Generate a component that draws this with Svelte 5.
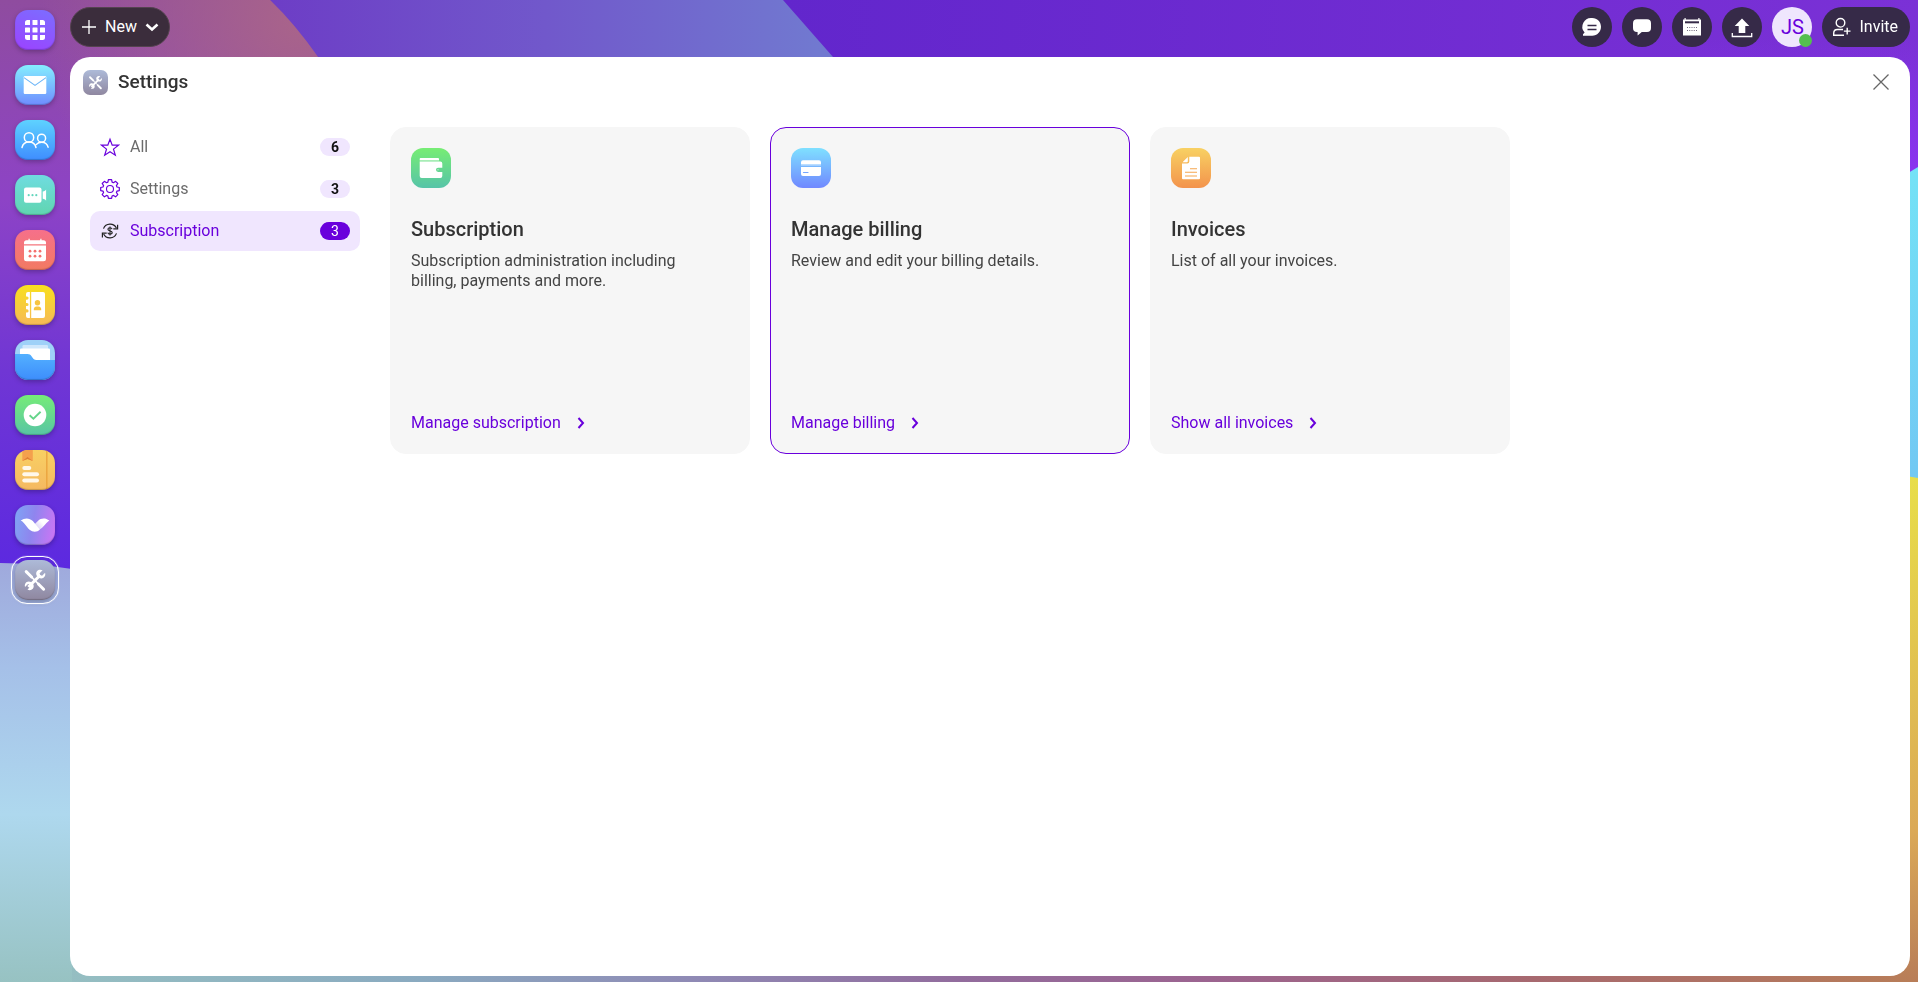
<script>
  const apps = [
    { id: 'apps', label: 'All apps' },
    { id: 'mail', label: 'Mail' },
    { id: 'contacts', label: 'Contacts' },
    { id: 'meetings', label: 'Meetings' },
    { id: 'calendar', label: 'Calendar' },
    { id: 'address', label: 'Address book' },
    { id: 'files', label: 'Files' },
    { id: 'tasks', label: 'Tasks' },
    { id: 'notes', label: 'Notes' },
    { id: 'sign', label: 'Partners' },
    { id: 'settings', label: 'Settings' }
  ];

  const tools = [
    { id: 'chat', label: 'Chat' },
    { id: 'comment', label: 'Comments' },
    { id: 'agenda', label: 'Agenda' },
    { id: 'upload', label: 'Upload' }
  ];

  const sections = [
    { id: 'all', label: 'All', count: 6 },
    { id: 'settings', label: 'Settings', count: 3 },
    { id: 'subscription', label: 'Subscription', count: 3 }
  ];

  const cards = [
    {
      id: 'wallet',
      title: 'Subscription',
      text: 'Subscription administration including billing, payments and more.',
      link: 'Manage subscription'
    },
    {
      id: 'billing',
      title: 'Manage billing',
      text: 'Review and edit your billing details.',
      link: 'Manage billing'
    },
    {
      id: 'invoice',
      title: 'Invoices',
      text: 'List of all your invoices.',
      link: 'Show all invoices'
    }
  ];

  let selected = $state('subscription');
  let highlighted = $state('billing');
</script>

{#snippet toolsGlyph()}
  <path d="M11.2 11.6 16.6 17M23.6 24.2l5 5" stroke="#fff" stroke-width="3" stroke-linecap="round" />
  <path d="m16 16.4 8 8.2" stroke="#fff" stroke-width="1.6" />
  <path d="M13.4 27 25.4 15" stroke="#fff" stroke-width="3" />
  <path d="M27.6 10.3l-3 3 .5 2 2 .5 3-3c.6 2-.1 4-1.6 5-1.3.9-3 .9-4.4.2l-2.5-2.5c-.7-1.5-.6-3.3.5-4.5 1.3-1.5 3.5-1.7 5.5-.7z" fill="#fff" />
  <path d="M12.5 29.6l3-3-.5-2-2-.5-3 3c-.6-2 .1-4 1.6-5 1.3-.9 3-.9 4.4-.2l2.3 2.3c.7 1.5.6 3.3-.5 4.5-1.3 1.5-3.3 1.9-5.3.9z" fill="#fff" />
{/snippet}

<svg class="wallpaper" viewBox="0 0 1918 982" preserveAspectRatio="none" aria-hidden="true">
  <defs>
    <linearGradient id="w-left" x1="0" y1="0" x2="0" y2="570" gradientUnits="userSpaceOnUse">
      <stop offset="0" stop-color="#8f4c9f" />
      <stop offset=".35" stop-color="#8d43c6" />
      <stop offset=".65" stop-color="#7036d4" />
      <stop offset="1" stop-color="#5c29e0" />
    </linearGradient>
    <radialGradient id="w-left-warm" cx="300" cy="20" r="260" gradientUnits="userSpaceOnUse">
      <stop offset="0" stop-color="#a9648a" />
      <stop offset="1" stop-color="#a9648a" stop-opacity="0" />
    </radialGradient>
    <linearGradient id="w-band" x1="270" y1="0" x2="820" y2="0" gradientUnits="userSpaceOnUse">
      <stop offset="0" stop-color="#6d3dc6" />
      <stop offset=".5" stop-color="#7158cb" />
      <stop offset="1" stop-color="#7179d0" />
    </linearGradient>
    <linearGradient id="w-top" x1="783" y1="0" x2="1918" y2="60" gradientUnits="userSpaceOnUse">
      <stop offset="0" stop-color="#6226cc" />
      <stop offset="1" stop-color="#7b31d6" />
    </linearGradient>
    <linearGradient id="w-edge" x1="0" y1="40" x2="0" y2="175" gradientUnits="userSpaceOnUse">
      <stop offset="0" stop-color="#8a34f0" stop-opacity="0" />
      <stop offset="1" stop-color="#8a34f0" />
    </linearGradient>
    <linearGradient id="w-cyan" x1="0" y1="170" x2="0" y2="478" gradientUnits="userSpaceOnUse">
      <stop offset="0" stop-color="#74e2f6" />
      <stop offset="1" stop-color="#72c8f3" />
    </linearGradient>
    <linearGradient id="w-yellow" x1="0" y1="476" x2="0" y2="982" gradientUnits="userSpaceOnUse">
      <stop offset="0" stop-color="#e8de49" />
      <stop offset=".7" stop-color="#dba956" />
      <stop offset="1" stop-color="#b87d58" />
    </linearGradient>
    <linearGradient id="w-sky" x1="0" y1="563" x2="0" y2="982" gradientUnits="userSpaceOnUse">
      <stop offset="0" stop-color="#9fa9dc" />
      <stop offset=".25" stop-color="#a5c0e8" />
      <stop offset=".6" stop-color="#aed8ee" />
      <stop offset="1" stop-color="#97c2c2" />
    </linearGradient>
    <linearGradient id="w-bottom" x1="0" y1="0" x2="1918" y2="0" gradientUnits="userSpaceOnUse">
      <stop offset="0" stop-color="#97c2c2" />
      <stop offset=".22" stop-color="#8aaac0" />
      <stop offset=".36" stop-color="#8f8ab5" />
      <stop offset=".5" stop-color="#926c9d" />
      <stop offset=".63" stop-color="#9c6490" />
      <stop offset=".8" stop-color="#a7696f" />
      <stop offset="1" stop-color="#b87d58" />
    </linearGradient>
  </defs>
  <rect width="1918" height="982" fill="url(#w-top)" />
  <rect x="1700" y="40" width="218" height="140" fill="url(#w-edge)" />
  <path d="M200 0H783L833 57V200H200z" fill="url(#w-band)" />
  <path d="M0 0H270Q295 24 318 57V640H0z" fill="url(#w-left)" />
  <path d="M0 0H270Q295 24 318 57V300H0z" fill="url(#w-left-warm)" />
  <rect y="940" x="60" width="1858" height="42" fill="url(#w-bottom)" />
  <path d="M0 563Q36 563 72 569V982H0z" fill="url(#w-sky)" />
  <path d="M1900 178 1918 167V500H1900z" fill="url(#w-cyan)" />
  <path d="M1900 475 1918 478V982H1900z" fill="url(#w-yellow)" />
</svg>

<div class="shell">
  <nav class="rail" aria-label="Apps">
    {#each apps as app}
      <button class="tile {app.id}" class:current={app.id === 'settings'} aria-label={app.label}>
        <svg viewBox="0 0 40 40" fill="none" aria-hidden="true">
          {#if app.id === 'apps'}
            <g fill="#fff">
              <path d="M12.5 10H15v5h-5v-2.5a2.5 2.5 0 0 1 2.5-2.5zM25 10h2.5a2.5 2.5 0 0 1 2.5 2.5V15h-5zM10 25h5v5h-2.5a2.5 2.5 0 0 1-2.5-2.5zM25 25h5v2.5a2.5 2.5 0 0 1-2.5 2.5H25z" />
              <rect x="17.5" y="10" width="5" height="5" rx=".6" />
              <rect x="10" y="17.5" width="5" height="5" rx=".6" />
              <rect x="17.5" y="17.5" width="5" height="5" rx=".6" />
              <rect x="25" y="17.5" width="5" height="5" rx=".6" />
              <rect x="17.5" y="25" width="5" height="5" rx=".6" />
            </g>
          {:else if app.id === 'mail'}
            <rect x="8.7" y="11" width="22.6" height="18" rx="1.2" fill="#fff" />
            <path d="m9 12.6 11 7.8 11-7.8" stroke="#6cb5f8" stroke-width="1.1" />
          {:else if app.id === 'contacts'}
            <g stroke="#fff" stroke-width="1.5" stroke-linecap="round">
              <circle cx="14" cy="17.4" r="4.7" />
              <circle cx="26.6" cy="18.2" r="4" />
              <path d="M7 27.5c.8-3.3 3.6-5.4 7-5.4s6.2 2.1 7 5.4M21.5 24.4c1.2-1.5 3-2.2 5.1-2.2 3.3 0 5.8 2 6.5 5" />
            </g>
          {:else if app.id === 'meetings'}
            <rect x="9" y="12.5" width="17.5" height="15.3" rx="2" fill="#fff" />
            <path d="M27.7 16.6c2-.4 2.8-1.1 3.4-2v11.2c-.6-.9-1.4-1.6-3.4-2z" fill="#fff" />
            <g fill="#64d6bd"><circle cx="13.7" cy="20.2" r="1.1" /><circle cx="17.5" cy="20.2" r="1.1" /><circle cx="21.3" cy="20.2" r="1.1" /></g>
          {:else if app.id === 'calendar'}
            <path d="M11.5 10.3h2V8.8h1.2v1.5h10.6V8.8h1.2v1.5h2a2.5 2.5 0 0 1 2.5 2.5v1.4H9v-1.4a2.5 2.5 0 0 1 2.5-2.5zM9 15.4h22v13.4a2.5 2.5 0 0 1-2.5 2.5h-17A2.5 2.5 0 0 1 9 28.8z" fill="#fff" />
            <g fill="#f4726f">
              {#each [21.2, 26.2] as cy}{#each [15, 20, 25] as cx}<circle {cx} {cy} r="1.4" />{/each}{/each}
            </g>
          {:else if app.id === 'address'}
            <path d="M13 7h1.9v26H13a2 2 0 0 1-2-2v-3.5h1a1.6 1.6 0 0 0 0-3.2h-1v-3.2h1a1.6 1.6 0 0 0 0-3.2h-1v-3.2h1a1.6 1.6 0 0 0 0-3.2h-1V9a2 2 0 0 1 2-2zM16.2 7H28a2 2 0 0 1 2 2v22a2 2 0 0 1-2 2H16.2z" fill="#fff" />
            <circle cx="22.5" cy="17.7" r="2.7" fill="#f7c441" />
            <path d="M18.8 25.2v-1.3c0-1.6 1.3-2.5 2.6-2.5h2.2c1.3 0 2.6.9 2.6 2.5v1.3z" fill="#f7c441" />
          {:else if app.id === 'files'}
            <rect x="7.5" y="5" width="25.5" height="8" rx="1.2" fill="#cfe7fc" />
            <rect x="5" y="8.5" width="30" height="14" rx="1.2" fill="#fff" />
            <path d="M0 14h12.5c2 0 3 .8 4.2 2.4S19 20 21.5 20H40v20H0z" fill="url(#g-folder)" />
            <defs><linearGradient id="g-folder" x2="0" y2="1"><stop stop-color="#53b0ff" /><stop offset="1" stop-color="#3d8dfc" /></linearGradient></defs>
          {:else if app.id === 'tasks'}
            <circle cx="20" cy="20" r="11.3" fill="#fff" />
            <path d="m14.6 20.3 3.8 3.3 7.2-6.8" stroke="#66d58b" stroke-width="1.9" />
          {:else if app.id === 'notes'}
            <path d="M31.8 0v40" stroke="#eca640" stroke-width="1.5" />
            <path d="M7.3 0h10.5v11l-5.25-2-5.25 2z" fill="#f4a04d" />
            <path d="m7.3 11 5.25-4 5.25 4-5.25-2z" fill="#e07f35" />
            <g fill="#fff8ea"><rect x="7.3" y="16" width="9" height="4" rx="2" /><rect x="7.3" y="22.3" width="16.7" height="4" rx="2" /><rect x="7.3" y="28.6" width="16.7" height="4" rx="2" /></g>
          {:else if app.id === 'sign'}
            <path d="M34.3 15.6c-4-2.9-8.2-2.6-11.4.4l-4.6 4.4 4 5.2c5.5-1.3 8-7.2 12-10z" fill="url(#g-wing)" />
            <defs><linearGradient id="g-wing" x1="1" x2="0" y2=".7"><stop offset=".45" stop-color="#fff" /><stop offset="1" stop-color="#d5c9f5" /></linearGradient></defs>
            <path d="M5.7 15.6c4.200-3 8.800-2.600 12.100.4l7 8.400c-2.300 2.800-7 3-10.200.4-3-2.400-4.900-7.200-8.900-9.200z" fill="#fff" />
          {:else}
            {@render toolsGlyph()}
          {/if}
        </svg>
      </button>
    {/each}
  </nav>

  <div class="main">
    <header class="topbar">
      <button class="pill new">
        <svg width="16" height="16" viewBox="0 0 16 16" aria-hidden="true"><path d="M8 1v14M1 8h14" stroke="#fff" stroke-width="1.3" /></svg>
        <span>New</span>
        <svg width="14" height="16" viewBox="0 0 14 16" fill="none" aria-hidden="true"><path d="m1.5 5.5 5.500 5 5.500-5" stroke="#fff" stroke-width="2.6" /></svg>
      </button>
      <div class="actions">
        {#each tools as tool}
          <button class="round" aria-label={tool.label}>
            <svg viewBox="0 0 40 40" fill="none" aria-hidden="true">
              {#if tool.id === 'chat'}
                <path d="M20.2 11c5 0 8.800 3.900 8.800 8.800s-3.800 8.900-8.800 8.900H11v-1.500l1.600-1.600A8.800 8.800 0 0 1 20.200 11z" fill="#fff" />
                <path d="M15.500 18.500h9M15.500 22.500h9" stroke="#362a48" stroke-width="1.3" />
              {:else if tool.id === 'comment'}
                <path d="M15 12.300h10a4 4 0 0 1 4 4v4.800a4 4 0 0 1-4 4h-5.200L15.600 28.500v-3.400H15a4 4 0 0 1-4-4v-4.800a4 4 0 0 1 4-4z" fill="#fff" />
              {:else if tool.id === 'agenda'}
                <path d="M12.500 11h1.200v1.400h12.600V11h1.200v1.400H29V28.500H11V12.400h1.500z" fill="#fff" />
                <path d="M13 15.300h14" stroke="#362a48" stroke-width="2" />
                <path d="M15 20.500h10M15 23.500h10" stroke="#362a48" stroke-width="1" stroke-dasharray="1 1.25" opacity=".7" />
              {:else}
                <path d="M20 11.500 27.300 19h-4v7h-6.600v-7h-4z" fill="#fff" />
                <path d="M10.300 26v3.500h19.400V26" stroke="#fff" stroke-width="1.3" />
              {/if}
            </svg>
          </button>
        {/each}
        <button class="round avatar">JS<i class="presence"></i></button>
        <button class="pill invite">
          <svg width="20" height="20" viewBox="0 0 20 20" fill="none" aria-hidden="true">
            <circle cx="8.5" cy="5.8" r="4.3" stroke="#fff" stroke-width="1.4" />
            <path d="M12 18.300H1.700v-2.100c0-2.300 1.500-3.700 3.800-3.700H11M15.200 10.800v6.600M11.900 14.100h6.600" stroke="#fff" stroke-width="1.4" />
          </svg>
          <span>Invite</span>
        </button>
      </div>
    </header>

    <main class="panel">
      <div class="heading">
        <svg class="heading-icon" viewBox="0 0 40 40" fill="none" aria-hidden="true">{@render toolsGlyph()}</svg>
        <h1>Settings</h1>
        <button class="close" aria-label="Close">
          <svg width="16" height="16" viewBox="0 0 16 16" aria-hidden="true"><path d="m.5.5 15 15M15.500.5l-15 15" stroke="#666" stroke-width="1.3" /></svg>
        </button>
      </div>

      <div class="body">
        <nav class="sections" aria-label="Setting groups">
          {#each sections as section}
            <button class="section" class:selected={selected === section.id} onclick={() => (selected = section.id)}>
              <svg width="20" height="20" viewBox="0 0 20 20" fill="none" aria-hidden="true">
                {#if section.id === 'all'}
                  <path d="m10 2.200 2.200 6h6.200l-4.900 3.900 1.800 6.100L10 14.700l-5.300 3.500 1.800-6.100L1.600 8.200h6.200z" stroke="#6900dc" stroke-width="1.2" />
                {:else if section.id === 'settings'}
                  <path d="M8.400.7h3.200l.5 2.400 1.400.6 2.100-1.400 2.200 2.200-1.400 2.100.6 1.400 2.300.5v3.100l-2.300.5-.6 1.400 1.400 2.100-2.200 2.200-2.100-1.400-1.400.6-.5 2.300H8.400l-.5-2.300-1.400-.6-2.100 1.400-2.200-2.200 1.400-2.100-.6-1.400-2.300-.5V8.500L3 8l.6-1.400-1.400-2.100 2.200-2.200 2.100 1.400 1.400-.6z" stroke="#6900dc" stroke-width="1.2" stroke-linejoin="round" />
                  <circle cx="10" cy="10" r="3.5" stroke="#6900dc" stroke-width="1.1" />
                {:else}
                  <path d="M3.500 7.600A7.100 7.100 0 0 1 16.400 7M16.500 12.400A7.100 7.100 0 0 1 3.600 13" stroke="#222" stroke-width="1.2" />
                  <path d="M17.600 3.700v4.200h-4.300M2.400 16.400v-4.200h4.300" stroke="#222" stroke-width="1.2" />
                  <path d="M12.100 8.100c-.3-.9-1-1.300-2.100-1.300-1.200 0-2.100.5-2.100 1.500 0 2.200 4.300 1.100 4.300 3.300 0 1-.9 1.600-2.200 1.600-1.200 0-2-.5-2.200-1.500M10 5.600v8.800" stroke="#222" stroke-width="1.1" />
                {/if}
              </svg>
              <span class="name">{section.label}</span>
              <span class="count">{section.count}</span>
            </button>
          {/each}
        </nav>

        <div class="cards">
          {#each cards as card}
            <article class="card" class:highlighted={highlighted === card.id} onpointerenter={() => (highlighted = card.id)}>
              <svg class="card-icon {card.id}" viewBox="0 0 40 40" fill="none" aria-hidden="true">
                {#if card.id === 'wallet'}
                  <path d="M9.500 10h17.500a1 1 0 0 1 1 1v1H8.700v-1a1 1 0 0 1 .8-1z" fill="#fff" />
                  <path d="M8.700 12.700H28" stroke="#fff" stroke-width="1" opacity=".5" />
                  <path d="M8.700 13.500h20.600a2 2 0 0 1 2 2v4.200h-4.200a2.100 2.100 0 0 0 0 4.200h4.200V28a2 2 0 0 1-2 2H10.700a2 2 0 0 1-2-2z" fill="#fff" />
                  <circle cx="27" cy="21.8" r=".8" fill="#fff" opacity=".5" />
                {:else if card.id === 'billing'}
                  <path d="M12 12.300h16a2 2 0 0 1 2 2v1.900H10v-1.900a2 2 0 0 1 2-2zM10 19h20v7a2 2 0 0 1-2 2H12a2 2 0 0 1-2-2z" fill="#fff" />
                  <rect x="10" y="16.2" width="20" height="1.6" fill="#fff" opacity=".4" />
                  <path d="M12.500 24.500H17" stroke="#74a5ff" stroke-width="1.2" stroke-linecap="round" />
                {:else}
                  <path d="M18.300 8.700H28a1 1 0 0 1 1 1v20.600a1 1 0 0 1-1 1H12a1 1 0 0 1-1-1V15.500h5.300a2 2 0 0 0 2-2z" fill="#fff" />
                  <path d="M16.800 9v4.200a1 1 0 0 1-1 1h-4.300z" fill="#fff" />
                  <path d="M19 20.700h7M14 24.300h12M14 28h12" stroke="#f5a750" stroke-width="1.1" />
                {/if}
              </svg>
              <h2>{card.title}</h2>
              <p>{card.text}</p>
              <a href="#{card.id}">
                {card.link}
                <svg width="8" height="12" viewBox="0 0 8 12" fill="none" aria-hidden="true"><path d="m1.500 1 4.500 5-4.500 5" stroke="#6900dc" stroke-width="2" /></svg>
              </a>
            </article>
          {/each}
        </div>
      </div>
    </main>
  </div>
</div>

<style>
  :global(body) {
    margin: 0;
    font-family: Roboto, "Liberation Sans", sans-serif;
    font-size: 16px;
    line-height: 20px;
    color: #333;
  }
  button {
    font: inherit;
    border: 0;
    padding: 0;
    margin: 0;
    background: none;
    cursor: pointer;
  }
  svg {
    display: block;
    flex: none;
  }
  .wallpaper {
    position: fixed;
    inset: 0;
    width: 100%;
    height: 100%;
    z-index: -1;
  }
  .shell {
    display: flex;
    min-height: 100vh;
  }

  /* App rail */
  .rail {
    display: flex;
    flex-direction: column;
    gap: 15px;
    padding: 10px 15px;
  }
  .tile {
    position: relative;
    width: 40px;
    height: 40px;
    border-radius: 13px;
    box-shadow: 0 2px 5px rgba(0, 0, 0, 0.25);
  }
  .tile svg {
    width: 40px;
    height: 40px;
    border-radius: 13px;
  }
  .tile::after {
    content: "";
    position: absolute;
    inset: 0;
    border-radius: 13px;
    box-shadow: inset 0 -1px 1px rgba(0, 0, 0, 0.2);
  }
  .tile.current::before {
    content: "";
    position: absolute;
    inset: -4px;
    border: 1px solid #fff;
    border-radius: 16px;
    box-shadow: 0 0 1px #fff;
  }
  .tile.apps { background: linear-gradient(200deg, #7b6eff, #9c42ff); }
  .tile.mail { background: linear-gradient(#84eeff, #6f8dff); }
  .tile.contacts { background: linear-gradient(#5ed2ff, #3f8dff); }
  .tile.meetings { background: linear-gradient(#6fdce0, #60d5b0); }
  .tile.calendar { background: linear-gradient(#f6708a, #f27a62); }
  .tile.address { background: linear-gradient(#f8e01e, #f6b958); }
  .tile.files { background: #9fd1f8; }
  .tile.tasks { background: linear-gradient(#76ec78, #58c5a4); }
  .tile.notes { background: linear-gradient(#f8d063, #f5b961); }
  .tile.sign { background: linear-gradient(100deg, #7ea5f5, #8f85ee 45%, #d074f5); }
  .tile.settings { background: linear-gradient(#adbad8, #8f87a0); }

  .main {
    flex: 1;
    min-width: 0;
    display: flex;
    flex-direction: column;
    padding: 0 8px 6px 0;
  }

  /* Top bar */
  .topbar {
    display: flex;
    justify-content: space-between;
    padding: 7px 0 10px;
  }
  .actions {
    display: flex;
    gap: 10px;
  }
  .pill {
    display: flex;
    align-items: center;
    height: 40px;
    box-sizing: border-box;
    border-radius: 20px;
    color: #fff;
    background: #362a48;
  }
  .new {
    gap: 8px;
    padding: 0 10px;
    background: #3b2d3c;
    border: 1px solid #54434f;
  }
  .invite {
    gap: 7px;
    padding: 0 12px 0 10px;
  }
  .round {
    position: relative;
    width: 40px;
    height: 40px;
    border-radius: 50%;
    background: #362a48;
  }
  .round svg {
    width: 40px;
    height: 40px;
  }
  .avatar {
    background: #efe6fd;
    color: #6900dc;
    font-size: 20px;
  }
  .presence {
    position: absolute;
    right: 0;
    bottom: 0;
    width: 13px;
    height: 13px;
    border-radius: 50%;
    background: #54bf4f;
  }

  /* Panel */
  .panel {
    flex: 1;
    background: #fff;
    border-radius: 20px;
  }
  .heading {
    display: flex;
    align-items: center;
    gap: 10px;
    height: 50px;
    padding: 0 21px 0 13px;
  }
  .heading-icon {
    width: 25px;
    height: 25px;
    border-radius: 7px;
    background: linear-gradient(#adbad8, #8f87a0);
  }
  h1, h2 {
    margin: 0;
    font-weight: 500;
  }
  h1 {
    flex: 1;
    font-size: 19px;
  }
  .body {
    display: flex;
    gap: 30px;
    padding: 20px;
  }
  .sections {
    width: 270px;
    flex: none;
    display: flex;
    flex-direction: column;
    gap: 2px;
  }
  .section {
    display: flex;
    align-items: center;
    gap: 10px;
    height: 40px;
    padding: 0 10px;
    border-radius: 10px;
    color: #6b6b6b;
    text-align: left;
  }
  .name {
    flex: 1;
  }
  .count {
    width: 30px;
    border-radius: 9px;
    background: #f0e6fe;
    color: #111;
    font-size: 14px;
    font-weight: 700;
    line-height: 18px;
    text-align: center;
  }
  .selected {
    background: #f0e6fe;
    color: #6900dc;
  }
  .selected .count {
    background: #6900dc;
    color: #fff;
    font-weight: 400;
  }
  .cards {
    flex: 1;
    display: grid;
    grid-template-columns: repeat(auto-fill, minmax(300px, 360px));
    align-items: start;
    gap: 20px;
  }
  .card {
    box-sizing: border-box;
    min-height: 327px;
    display: flex;
    flex-direction: column;
    align-items: flex-start;
    padding: 20px;
    border: 1px solid #f6f6f6;
    border-radius: 16px;
    background: #f6f6f6;
  }
  .highlighted {
    border-color: #6900dc;
  }
  .card-icon {
    width: 40px;
    height: 40px;
    border-radius: 12px;
    margin-bottom: 29px;
  }
  .wallet { background: linear-gradient(#77ed74, #56c4a8); }
  .billing { background: linear-gradient(#7fe0ff, #7088ff); }
  .invoice { background: linear-gradient(#f8d163, #f3934c); }
  h2 {
    font-size: 20px;
    line-height: 24px;
    margin-bottom: 10px;
  }
  p {
    margin: 0;
    max-width: 300px;
    color: #444;
  }
  .card a {
    display: flex;
    align-items: center;
    gap: 16px;
    margin-top: auto;
    color: #6900dc;
    text-decoration: none;
  }
</style>
